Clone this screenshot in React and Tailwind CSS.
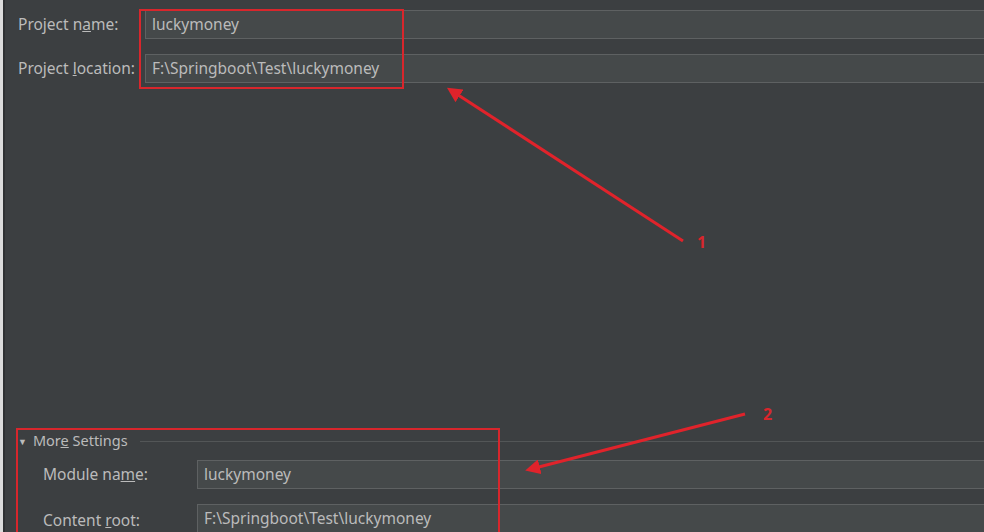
import React from 'react';

const font = { fontFamily: '"Noto Sans", "Open Sans", Arial, sans-serif' };

function Field({ value }) {
  return (
    <div className="h-[29px] flex items-center bg-[#45494a] border-y border-l border-[#5e6162] pl-[6px] text-[15.5px] text-[#bbbbbb]">
      <span>{value}</span>
    </div>
  );
}

function Label({ children, className = '' }) {
  return (
    <div className={`h-[29px] flex items-center text-[15.5px] text-[#bbbbbb] ${className}`}>
      <span>{children}</span>
    </div>
  );
}

function Arrows() {
  return (
    <svg className="absolute inset-0 pointer-events-none" width="984" height="532">
      <defs>
        <marker id="head" markerWidth="5" markerHeight="5" refX="3" refY="2.5" orient="auto">
          <path d="M0,0 L5,2.5 L0,5 Z" fill="#e0232b" />
        </marker>
      </defs>
      <line x1="683" y1="241" x2="452" y2="91" stroke="#e0232b" strokeWidth="3" markerEnd="url(#head)" />
      <line x1="745" y1="414" x2="531" y2="469" stroke="#e0232b" strokeWidth="3" markerEnd="url(#head)" />
    </svg>
  );
}

export default function App() {
  return (
    <div className="relative flex w-[984px] h-[532px] overflow-hidden bg-[#3c3f41]" style={font}>
      {/* left edge of window behind */}
      <div className="w-[3px] bg-[#dcdcdc]" />
      <div className="w-[2px] bg-[#2f3133]" />

      <div className="flex-1 flex flex-col">
        {/* project fields */}
        <div className="grid grid-cols-[127px_1fr] gap-y-[15px] pt-[10px] pl-[13px]">
          <Label>Project n<u>a</u>me:</Label>
          <Field value="luckymoney" />
          <Label>Project <u>l</u>ocation:</Label>
          <Field value="F:\Springboot\Test\luckymoney" />
        </div>

        <div className="flex-1" />

        {/* more settings */}
        <div className="-mb-[1px]">
          <div className="h-[18px] flex items-center pl-[13px] gap-[6px] text-[14.5px] text-[#bbbbbb]">
            <span className="text-[9px] leading-none">▼</span>
            <span>Mor<u>e</u> Settings</span>
            <div className="flex-1 h-px bg-[#535657] ml-[6px]" />
          </div>
          <div className="grid grid-cols-[154px_1fr] gap-y-[15px] pt-[10px] pl-[38px]">
            <Label>Module na<u>m</u>e:</Label>
            <Field value="luckymoney" />
            <Label className="pt-[4px]">Content <u>r</u>oot:</Label>
            <Field value="F:\Springboot\Test\luckymoney" />
          </div>
        </div>
      </div>

      {/* annotations */}
      <div className="absolute left-[139px] top-[9px] w-[265px] h-[80px] border-2 border-[#d8262c]" />
      <div className="absolute left-[16px] top-[428px] w-[484px] h-[120px] border-2 border-[#d8262c]" />
      <Arrows />
      <span className="absolute left-[697px] top-[230px] text-[16px] font-bold text-[#d8262c]">1</span>
      <span className="absolute left-[763px] top-[402px] text-[16px] font-bold text-[#d8262c]">2</span>
    </div>
  );
}
